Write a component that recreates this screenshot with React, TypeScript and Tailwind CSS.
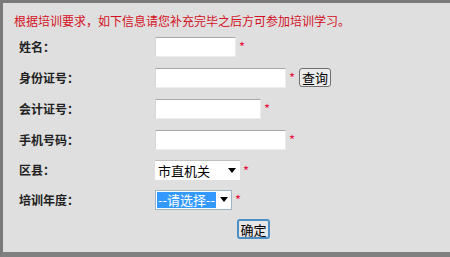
import React from "react";

const font = { fontFamily: '"SimSun","Noto Sans CJK SC","Liberation Sans",sans-serif' };

function Star() {
  return <span className="ml-[3px] text-[13px] leading-none text-[#e8103a]">*</span>;
}

function Input({ w }: { w: string }) {
  return (
    <div
      className={`${w} h-[20px] bg-white border border-[#ededed] border-t-[#a8a8a8] border-l-[#d8d8d8]`}
    />
  );
}

function Arrow() {
  return (
    <svg width="8" height="5" viewBox="0 0 8 5">
      <path d="M0 0 H8 L4 5 Z" fill="#000" />
    </svg>
  );
}

function Row({ label, h, children }: { label: string; h: string; children: React.ReactNode }) {
  return (
    <div className={`flex items-center ${h}`}>
      <div className="w-[152px] pl-[16px] font-bold text-[12px] text-[#222]">{label}</div>
      <div className="flex items-center">{children}</div>
    </div>
  );
}

export default function App() {
  return (
    <div
      className="w-[450px] h-[257px] bg-[#dfdfdf] border-t-[3px] border-t-[#7a7a7a] border-l-[3px] border-l-[#7a7a7a] border-b-[5px] border-b-[#808080] box-border overflow-hidden"
      style={font}
    >
      <div className="h-[28px] pt-[10px] pl-[11px] text-[12px] leading-[15px] text-[#d4101c]">
        根据培训要求，如下信息请您补充完毕之后方可参加培训学习。
      </div>
      <Row label="姓名：" h="h-[31px]">
        <Input w="w-[81px]" />
        <Star />
      </Row>
      <Row label="身份证号：" h="h-[31px]">
        <Input w="w-[131px]" />
        <Star />
        <button className="ml-[4px] h-[19px] w-[32px] bg-[#ececec] border border-[#707070] rounded-[3px] text-[13px] leading-none text-black flex items-center justify-center">
          查询
        </button>
      </Row>
      <Row label="会计证号：" h="h-[31px]">
        <Input w="w-[106px]" />
        <Star />
      </Row>
      <Row label="手机号码：" h="h-[31px]">
        <Input w="w-[131px]" />
        <Star />
      </Row>
      <Row label="区县：" h="h-[30px]">
        <div className="w-[85px] h-[20px] bg-white border-t border-t-[#c0c0c0] flex items-center justify-between pl-[3px] pr-[4px]">
          <span className="text-[13px] leading-none text-black">市直机关</span>
          <Arrow />
        </div>
        <Star />
      </Row>
      <Row label="培训年度：" h="h-[29px]">
        <div className="w-[77px] h-[20px] bg-white border border-[#9ab4c8] flex items-center justify-between pl-[1px] pr-[3px]">
          <span className="bg-[#3399ff] text-white text-[13px] leading-[16px] px-[1px]">--请选择--</span>
          <Arrow />
        </div>
        <Star />
      </Row>
      <div className="flex h-[30px] items-center">
        <div className="w-[234px]" />
        <button className="h-[20px] w-[33px] bg-[#e6e6e6] border-2 border-[#4b8fc4] rounded-[3px] text-[13px] leading-none text-black flex items-center justify-center">
          确定
        </button>
      </div>
    </div>
  );
}
